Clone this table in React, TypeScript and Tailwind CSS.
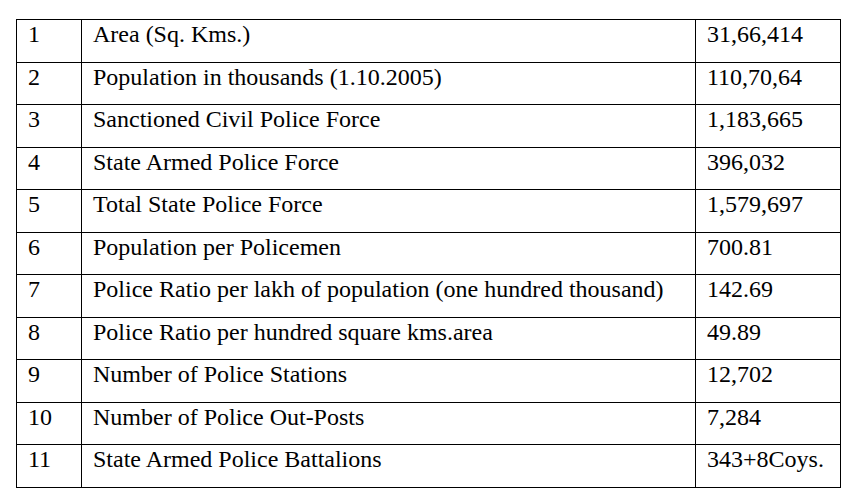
import React from 'react';

const rows: [string, string, string][] = [
  ['1', 'Area (Sq. Kms.)', '31,66,414'],
  ['2', 'Population in thousands (1.10.2005)', '110,70,64'],
  ['3', 'Sanctioned Civil Police Force', '1,183,665'],
  ['4', 'State Armed Police Force', '396,032'],
  ['5', 'Total State Police Force', '1,579,697'],
  ['6', 'Population per Policemen', '700.81'],
  ['7', 'Police Ratio per lakh of population (one hundred thousand)', '142.69'],
  ['8', 'Police Ratio per hundred square kms.area', '49.89'],
  ['9', 'Number of Police Stations', '12,702'],
  ['10', 'Number of Police Out-Posts', '7,284'],
  ['11', 'State Armed Police Battalions', '343+8Coys.'],
];

const cell = "border border-black align-top pl-[11px] pt-[2px] leading-[24px] whitespace-nowrap";

export default function App() {
  return (
    <div className="w-[848px] h-[499px] bg-white pt-[19px] pl-[16px] font-['Liberation_Serif','Times_New_Roman',serif]">
      <table className="border-collapse text-[24px] text-black table-fixed w-[824px]">
        <colgroup>
          <col className="w-[65px]" />
          <col className="w-[614px]" />
          <col className="w-[145px]" />
        </colgroup>
        <tbody>
          {rows.map(([n, label, value]) => (
            <tr key={n} className="h-[42.5px]">
              <td className={cell}>{n}</td>
              <td className={cell}>{label}</td>
              <td className={cell}>{value}</td>
            </tr>
          ))}
        </tbody>
      </table>
    </div>
  );
}
